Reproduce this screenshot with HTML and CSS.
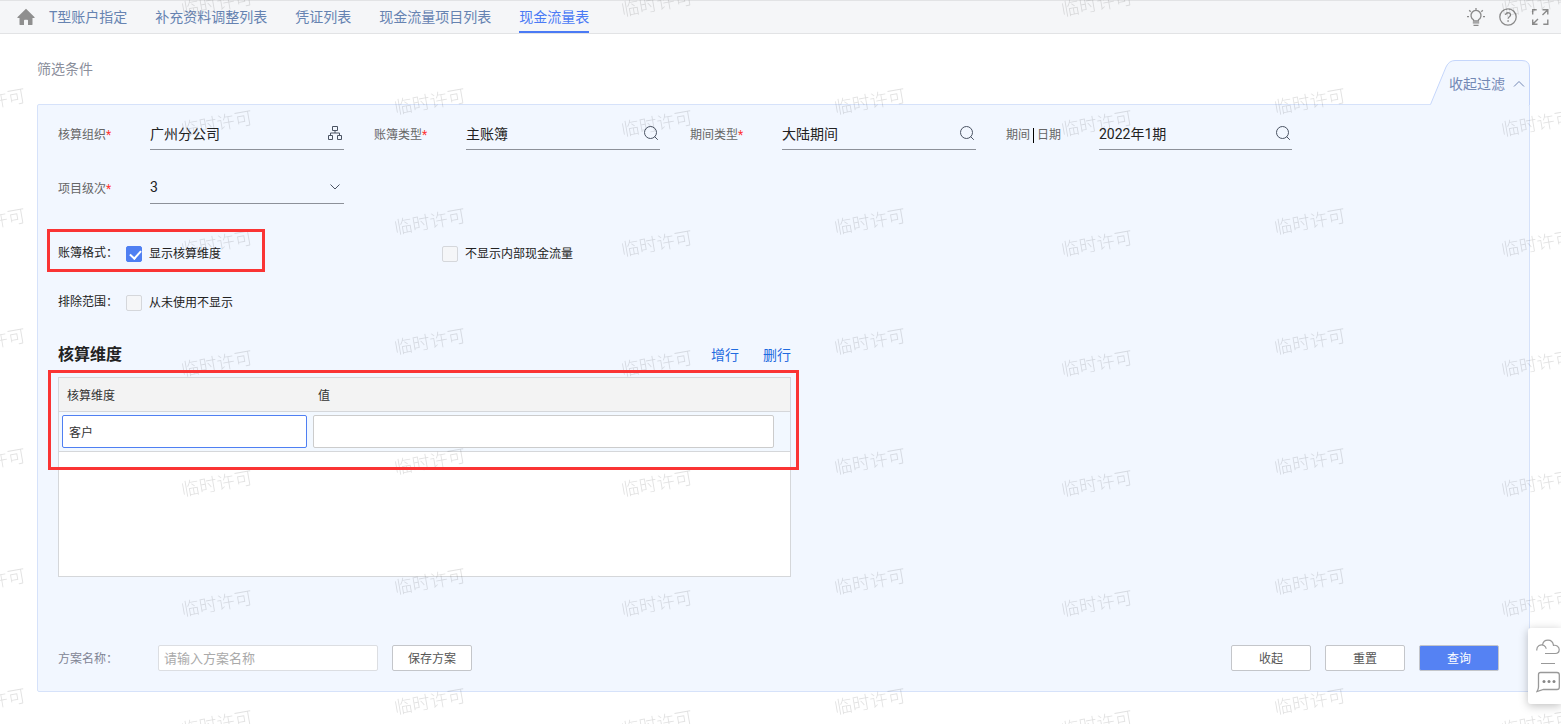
FILE: index.html
```
<!DOCTYPE html>
<html lang="zh-CN">
<head>
    <meta charset="UTF-8">
    <meta name="viewport" content="width=device-width, initial-scale=1.0">
    <title>现金流量表</title>
    <link rel="stylesheet" href="styles.css">
</head>
<body>

    <header class="topbar">
        <a href="#" class="home" aria-label="首页">
            <svg width="18" height="18" viewBox="0 0 18 18"><path d="M9 .8 17.4 9c.4.5.2 1-.4 1h-1.500v6.200c0 .6-.3.900-.9.900H11v-4.600c0-.5-.3-.8-.8-.8H7.800c-.5 0-.8.3-.8.8v4.600H3.400c-.6 0-.9-.3-.9-.9V10H1c-.6 0-.8-.5-.4-1z" fill="#8f8f8f"/></svg>
        </a>
        <nav class="tabs">
            <a href="#" class="tab">T型账户指定</a>
            <a href="#" class="tab">补充资料调整列表</a>
            <a href="#" class="tab">凭证列表</a>
            <a href="#" class="tab">现金流量项目列表</a>
            <a href="#" class="tab active">现金流量表</a>
        </nav>
        <div class="tools">
            <button type="button" class="icon-btn" aria-label="提示">
                <svg width="18" height="18" viewBox="0 0 18 18" fill="none" stroke="#8a8a8a" stroke-width="1.300"><path d="M6.500 13v-1.200A5 5 0 1 1 11.500 11.800V13zM5.800 14.800h6.400M6.500 17.300h5M9 0v1.800M0 8.700h2M16 8.700h2M2.200 2.200l1.500 1.500M15.800 2.200l-1.500 1.500"/></svg>
            </button>
            <button type="button" class="icon-btn" aria-label="帮助">
                <svg width="18" height="18" viewBox="0 0 18 18" fill="none" stroke="#8a8a8a" stroke-width="1.300"><circle cx="9" cy="9" r="8.200"/><path d="M6.600 7.100c0-3.200 4.900-3 4.900-.2 0 1.800-2.400 1.900-2.400 3.900"/><path d="M9.100 12.300v1.500" stroke-width="1.500"/></svg>
            </button>
            <button type="button" class="icon-btn" aria-label="全屏">
                <svg width="18" height="18" viewBox="0 0 18 18" fill="none" stroke="#8a8a8a" stroke-width="1.400"><path d="M1.700 6.500V1.700h4M11.500 1.700h5.300v4.800M16.800 1.700 11.500 7M16.800 11.500v4.800h-4.500M6.500 16.300H1.700v-4.800M1.700 16.300 7 11"/></svg>
            </button>
        </div>
    </header>

    <main class="page">
        <div class="filter-head">
            <h2 class="filter-title">筛选条件</h2>
            <button type="button" class="fold">
                <svg class="fold-shape" width="100" height="45" viewBox="0 0 100 45"><path d="M0 45V44.500H.5L16 7Q19 .5 25 .5H92Q99.500 .5 99.500 8V45z" fill="#f2f7ff"/><path d="M.5 44.500 16 7Q19 .5 25 .5H92Q99.500 .5 99.500 8V45" fill="none" stroke="#c5d6fb"/></svg>
                <span class="fold-text">收起过滤</span>
                <svg class="fold-arrow" width="12" height="8" viewBox="0 0 12 8" fill="none" stroke="#7388b5"><path d="M1 6.500 6 1.500l5 5"/></svg>
            </button>
        </div>

        <form class="panel">
            <div class="fields">
                <div class="field">
                    <label for="org">核算组织<i>*</i></label>
                    <div class="control">
                        <input type="text" id="org" value="广州分公司">
                        <button type="button" class="icon-btn" aria-label="选择组织">
                            <svg width="16" height="16" viewBox="0 0 16 16" fill="none" stroke="#4a5363"><path d="M5.500 1.500h5v4h-5zM1.500 10.500h4v4h-4zM10.500 10.500h4v4h-4zM8 5.500V8M3.500 10.500V8h9v2.500"/></svg>
                        </button>
                    </div>
                </div>
                <div class="field">
                    <label for="book">账簿类型<i>*</i></label>
                    <div class="control">
                        <input type="text" id="book" value="主账簿">
                        <button type="button" class="icon-btn" aria-label="搜索账簿类型">
                            <svg width="16" height="16" viewBox="0 0 16 16" fill="none" stroke="#4a5363"><circle cx="7.500" cy="7.500" r="6"/><path d="m11.500 11.500 3.300 3.300"/></svg>
                        </button>
                    </div>
                </div>
                <div class="field">
                    <label for="period-type">期间类型<i>*</i></label>
                    <div class="control">
                        <input type="text" id="period-type" value="大陆期间">
                        <button type="button" class="icon-btn" aria-label="搜索期间类型">
                            <svg width="16" height="16" viewBox="0 0 16 16" fill="none" stroke="#4a5363"><circle cx="7.500" cy="7.500" r="6"/><path d="m11.500 11.500 3.300 3.300"/></svg>
                        </button>
                    </div>
                </div>
                <div class="field">
                    <label for="period" class="split"><span>期间</span><span>日期</span></label>
                    <div class="control">
                        <input type="text" id="period" value="2022年1期">
                        <button type="button" class="icon-btn" aria-label="搜索期间">
                            <svg width="16" height="16" viewBox="0 0 16 16" fill="none" stroke="#4a5363"><circle cx="7.500" cy="7.500" r="6"/><path d="m11.500 11.500 3.300 3.300"/></svg>
                        </button>
                    </div>
                </div>
                <div class="field">
                    <label for="level">项目级次<i>*</i></label>
                    <div class="control">
                        <select id="level">
                            <option>1</option>
                            <option>2</option>
                            <option selected>3</option>
                        </select>
                        <svg class="caret" width="12" height="8" viewBox="0 0 12 8" fill="none" stroke="#4a5363"><path d="m1.500 1.500 4.500 4.500 4.500-4.500"/></svg>
                    </div>
                </div>
            </div>

            <div class="options">
                <div class="option-row">
                    <span class="option-name">账簿格式：</span>
                    <label class="check"><input type="checkbox" checked>显示核算维度</label>
                    <label class="check"><input type="checkbox">不显示内部现金流量</label>
                    <div class="mark mark-format"></div>
                </div>
                <div class="option-row">
                    <span class="option-name">排除范围：</span>
                    <label class="check"><input type="checkbox">从未使用不显示</label>
                </div>
            </div>

            <section class="dimension">
                <div class="dimension-head">
                    <h3>核算维度</h3>
                    <a href="#">增行</a>
                    <a href="#">删行</a>
                </div>
                <div class="grid">
                    <table>
                        <thead>
                            <tr>
                                <th class="col-dim">核算维度</th>
                                <th>值</th>
                                <th class="col-end"></th>
                            </tr>
                        </thead>
                        <tbody>
                            <tr>
                                <td><input type="text" class="focused" value="客户" aria-label="核算维度"></td>
                                <td><input type="text" aria-label="值"></td>
                                <td></td>
                            </tr>
                        </tbody>
                    </table>
                    <div class="mark mark-grid"></div>
                </div>
            </section>

            <div class="actions">
                <label for="plan">方案名称：</label>
                <input type="text" id="plan" placeholder="请输入方案名称">
                <button type="button" class="btn">保存方案</button>
                <div class="actions-right">
                    <button type="button" class="btn">收起</button>
                    <button type="reset" class="btn">重置</button>
                    <button type="submit" class="btn primary">查询</button>
                </div>
            </div>
        </form>
    </main>

    <!-- Marca de agua -->
    <svg class="watermark" width="100%" height="100%" aria-hidden="true">
        <defs>
            <pattern id="wm" x="100" y="60" width="440" height="120" patternUnits="userSpaceOnUse">
                <text x="330" y="48" transform="rotate(-10 330 42)">临时许可</text>
                <text x="117" y="70" transform="rotate(-10 117 64)">临时许可</text>
            </pattern>
        </defs>
        <rect width="100%" height="100%" fill="url(#wm)"/>
    </svg>

    <aside class="float-bar">
        <button type="button" class="icon-btn" aria-label="云服务">
            <svg width="24" height="18" viewBox="0 0 24 18" fill="none" stroke="#999" stroke-width="1.200"><path d="M.8 12.500C.3 8 5 5.500 8 7.600q2 1.400 2.200 3.200M6.500 7C7.500.5 16.500.2 17.500 7.300c3-.4 5.700 1.300 5.700 4.200 0 2.600-1.700 4-4 4H9"/></svg>
        </button>
        <span class="float-line"></span>
        <button type="button" class="icon-btn" aria-label="消息">
            <svg width="24" height="22" viewBox="0 0 24 22" fill="none" stroke="#999" stroke-width="1.300"><path d="M4.500 1.500H21q2.300 0 2.300 2.300v12.400q0 2.300-2.300 2.300H7.500L1 20.500Q2.500 18 2.500 16V3.500q0-2 2-2z"/><g fill="#888" stroke="none"><circle cx="8" cy="10.500" r="1.500"/><circle cx="13" cy="10.500" r="1.500"/><circle cx="18" cy="10.500" r="1.500"/></g></svg>
        </button>
    </aside>

</body>
</html>
```
FILE: styles.css
```
* {
    box-sizing: border-box;
}
body {
    margin: 0;
    background: #fff;
    color: #333;
    font-family: Roboto, "Noto Sans CJK SC", sans-serif;
    font-size: 12px;
    line-height: 20px;
}
input, select, button {
    font: inherit;
    color: inherit;
}
button {
    cursor: pointer;
}
a {
    text-decoration: none;
}
svg {
    display: block;
}
h2, h3 {
    margin: 0;
}
.icon-btn {
    padding: 0;
    border: none;
    background: none;
}

/* Barra superior */
.topbar {
    display: flex;
    align-items: center;
    height: 34px;
    padding: 0 12px 0 17px;
    background: #f5f6f8;
    border-top: 1px solid #e2e3e5;
    border-bottom: 1px solid #e2e3e5;
}
.home {
    margin-right: 14px;
}
.tabs {
    display: flex;
    gap: 28px;
}
.tab {
    height: 32px;
    line-height: 32px;
    font-size: 14px;
    color: #6683b1;
}
.tab.active {
    color: #4a7af5;
    border-bottom: 2px solid #4a7af5;
}
.tools {
    display: flex;
    gap: 14px;
    margin-left: auto;
}

/* Filtro */
.page {
    padding: 26px 31px 32px 37px;
}
.filter-head {
    display: flex;
    justify-content: space-between;
    height: 44px;
}
.filter-title {
    font-size: 14px;
    font-weight: 400;
    line-height: 18px;
    color: #8b8f9c;
}
.fold {
    position: relative;
    display: flex;
    align-items: center;
    gap: 8px;
    width: 100px;
    height: 45px;
    padding: 2px 0 0 19px;
    border: none;
    background: none;
    color: #7388b5;
    font-size: 14px;
}
.fold-shape {
    position: absolute;
    top: 0;
    left: 0;
}
.fold-text, .fold-arrow {
    position: relative;
}
.panel {
    padding: 13px 30px 20px 20px;
    background: #f2f7ff;
    border: 1px solid #d6e2fa;
    border-radius: 2px;
}
.fields {
    display: flex;
    flex-wrap: wrap;
    gap: 22px 30px;
}
.field {
    display: flex;
    align-items: center;
    width: 286px;
}
.field label {
    flex: none;
    width: 92px;
    padding-top: 2px;
    color: #666;
}
.field i {
    color: #f33;
    font-style: normal;
}
.field .split {
    display: flex;
    align-items: center;
    width: 93px;
}
.split span + span {
    margin-left: 3px;
    padding-left: 3px;
    border-left: 1px solid #000;
    line-height: 15px;
}
.control {
    display: flex;
    flex: 1;
    align-items: center;
    min-width: 0;
    height: 32px;
    padding: 0 1px 2px 0;
    border-bottom: 1px solid #8d9199;
}
.control input, .control select {
    flex: 1;
    min-width: 0;
    height: 28px;
    padding: 0;
    border: none;
    outline: none;
    background: none;
    appearance: none;
    font-size: 14px;
    color: #222;
}
.caret {
    margin-right: 2px;
}

/* Opciones */
.options {
    display: flex;
    flex-direction: column;
    gap: 29px;
    margin-top: 39px;
    color: #222;
}
.option-row {
    position: relative;
    display: flex;
    align-items: center;
    height: 20px;
}
.option-name {
    width: 68px;
}
.check {
    display: flex;
    align-items: center;
    gap: 7px;
    width: 316px;
    padding-top: 2px;
}
.check input {
    width: 16px;
    height: 16px;
    margin: 0;
    border: 1px solid #d5d7db;
    border-radius: 2px;
    background: #f5f6f8;
    appearance: none;
}
.check input:checked {
    border-color: #4f7ff2;
    background: #4f7ff2;
}
.check input:checked::after {
    content: "";
    display: block;
    width: 5px;
    height: 9px;
    margin: 1px 0 0 5px;
    border: solid #fff;
    border-width: 0 2px 2px 0;
    transform: rotate(42deg);
}

/* Recuadros rojos */
.mark {
    position: absolute;
    z-index: 2;
    border: 3px solid #fa3434;
    pointer-events: none;
}
.mark-format {
    top: -14px;
    left: -11px;
    width: 218px;
    height: 43px;
}
.mark-grid {
    top: -8px;
    left: -11px;
    right: -9px;
    height: 100px;
}

/* Tabla de dimensiones */
.dimension {
    width: 733px;
    max-width: 100%;
    margin-top: 31px;
}
.dimension-head {
    display: flex;
    align-items: center;
    gap: 24px;
    height: 24px;
    margin-bottom: 10px;
}
.dimension-head h3 {
    flex: 1;
    font-size: 16px;
    font-weight: 700;
    color: #222;
}
.dimension-head a {
    font-size: 14px;
    color: #1f6be0;
}
.grid {
    position: relative;
    height: 200px;
    background: #fff;
    border: 1px solid #d5d7da;
}
.grid table {
    width: 100%;
    table-layout: fixed;
    border-collapse: separate;
    border-spacing: 0;
}
.grid th {
    height: 34px;
    padding: 2px 8px 0;
    background: #f3f3f3;
    border-bottom: 1px solid #d5d7da;
    font-weight: 400;
    text-align: left;
}
.grid td {
    height: 40px;
    padding: 3px;
    background: #f2f8ff;
    border-bottom: 1px solid #d5d7da;
}
.grid .col-dim {
    width: 251px;
}
.grid .col-end {
    width: 13px;
    padding: 0;
}
.grid input {
    display: block;
    width: 100%;
    height: 33px;
    padding: 0 6px;
    border: 1px solid #ccc;
    border-radius: 2px;
    outline: none;
    background: #fff;
}
.grid input.focused {
    border-color: #4f7ff2;
}

/* Botones */
.actions {
    display: flex;
    align-items: center;
    gap: 14px;
    margin-top: 68px;
}
.actions label {
    width: 86px;
    padding-top: 2px;
    color: #7f8494;
}
.actions input {
    width: 220px;
    height: 26px;
    padding: 0 5px;
    border: 1px solid #dcdee2;
    border-radius: 2px;
    background: #fff;
    font-size: 13px;
}
.actions input::placeholder {
    color: #aaa;
}
.actions-right {
    display: flex;
    gap: 14px;
    margin-left: auto;
}
.btn {
    width: 80px;
    height: 26px;
    padding: 2px 0 0;
    border: 1px solid #c4c6ca;
    border-radius: 2px;
    background: #fff;
    color: #555;
}
.btn.primary {
    background: #5582f3;
    color: #fff;
}

.watermark {
    position: fixed;
    top: 0;
    left: 0;
    z-index: 1;
    pointer-events: none;
}
.watermark text {
    font-size: 18px;
    font-weight: 300;
    text-anchor: middle;
    fill: #000;
    fill-opacity: 0.12;
}

/* Barra flotante */
.float-bar {
    position: fixed;
    right: 0;
    bottom: 20px;
    z-index: 3;
    display: flex;
    flex-direction: column;
    align-items: center;
    gap: 7px;
    width: 33px;
    height: 76px;
    padding: 10px 0 0 7px;
    background: #fff;
    border-radius: 3px 0 0 3px;
    box-shadow: 0 2px 10px rgba(0, 0, 0, 0.25);
}
.float-line {
    width: 14px;
    height: 1px;
    background: #999;
}
```
